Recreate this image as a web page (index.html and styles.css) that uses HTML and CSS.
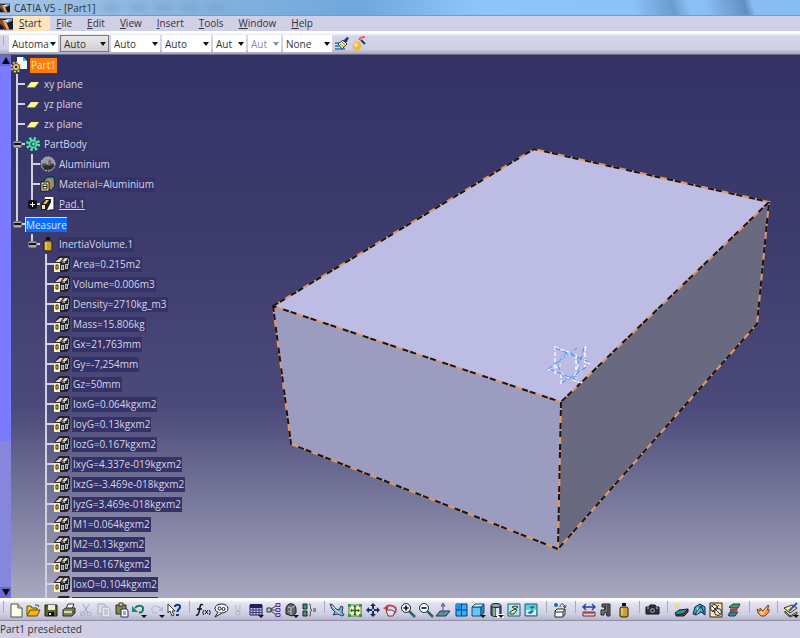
FILE: index.html
```html
<!DOCTYPE html>
<html lang="en">
<head>
<meta charset="utf-8">
<title>CATIA V5 - [Part1]</title>
<link rel="stylesheet" href="styles.css">
</head>
<body>
<svg class="sprite" aria-hidden="true">
  <symbol id="logo" viewBox="0 0 14 12"><rect width="14" height="12" fill="#131a2c"/><path d="M0 1 4 3 7 8 5 12 3 8 0 6Z" fill="#8a4a2c"/><path d="M2 1 7 4 10 12 7 12 5 7Z" fill="#ff9d4d"/><path d="M4 2 12 0 14 2 8 5Z" fill="#7fa4c8"/><path d="M4 2 10 1 8 4Z" fill="#e3f2ff"/></symbol>
  <symbol id="part" viewBox="0 0 16 16"><path d="M6 0h6l4 4v8H6z" fill="#f4fbff"/><path d="M12 0v4h4z" fill="#49b5c4"/><circle cx="5" cy="10" r="4.500" fill="none" stroke="#e9cf85" stroke-width="2" stroke-dasharray="2 1.500"/><circle cx="5" cy="10" r="3.500" fill="#f5dc8c" stroke="#5a4720"/><circle cx="5" cy="10" r="1.400" fill="#4a3210"/></symbol>
  <symbol id="plane" viewBox="0 0 16 16"><path d="M2 11 6 6h8l-4 5z" fill="#fff58f"/><path d="M2 11h8l4-5v1l-4 5H2z" fill="#96872c"/></symbol>
  <symbol id="body" viewBox="0 0 16 16"><circle cx="8" cy="8" r="6" fill="none" stroke="#0d4a50" stroke-width="4" stroke-dasharray="2.6 2.1"/><circle cx="8" cy="8" r="5.600" fill="none" stroke="#55e2b2" stroke-width="3" stroke-dasharray="2.3 2.1"/><circle cx="8" cy="8" r="4.400" fill="#4fdcae"/><circle cx="8" cy="8" r="2.600" fill="#1c6b62"/><circle cx="8.500" cy="8" r="1.200" fill="#8ff0cf"/></symbol>
  <symbol id="material" viewBox="0 0 16 16"><circle cx="8" cy="8" r="7" fill="#55555c"/><path d="M1 8a7 7 0 0 1 14 0l-4-1-3 2-3-2z" fill="#9a9aa4"/><path d="M3 10 7 9l3 1 4-2-1 4-5 2-4-1z" fill="#332b2b"/><path d="M9 3l3 3-4 2z" fill="#6f5f62"/><circle cx="8" cy="8" r="7" fill="none" stroke="#c9c9d2" stroke-dasharray="2 1"/></symbol>
  <symbol id="param" viewBox="0 0 16 16"><path d="M3 6 7 1h7l1 9-4 5z" fill="#4f9a84" stroke="#1c1c24"/><path d="M8 3h4l1 6-3 4z" fill="#c57a64"/><path d="M1 6h8v9H1z" fill="#fff3a8" stroke="#1a1a1a"/><path d="M3 8h4v5H3zM3 10.500h4" fill="none" stroke="#1a1a1a"/></symbol>
  <symbol id="pad" viewBox="0 0 16 16"><path d="M5 1h9v13H4l-1-1z" fill="#fff"/><path d="M1 8 5 3h6v3L7 14H1z" fill="#1a1a1a"/><path d="M2 9h3v4H2z" fill="#f6e88c"/><path d="M3 8 6 4h3L6 8z" fill="#d9c35a"/><path d="M14 1v13H9" fill="none" stroke="#111"/></symbol>
  <symbol id="inertia" viewBox="0 0 16 16"><path d="M6 1h4v3H6z" fill="#111"/><path d="M5 5h6l1 1v8l-1 1H5l-1-1V6z" fill="#caa02e" stroke="#2b2108"/><path d="M6 6v7" stroke="#f2d26a" stroke-width="1.500"/></symbol>
  <symbol id="meas" viewBox="0 0 16 16"><path d="M0 6 5 0h10l1 2v11l-3 3H0z" fill="#26242a"/><path d="M1 6 6 2h3L6 6zM8 5l3-3h3l-2 3z" fill="#e9d3cf"/><path d="M0 7h6v9H0z" fill="#fff2a6"/><path d="M2 9h2v4H2z" fill="#fff2a6" stroke="#26242a"/><path d="M7 9h3v5H7zM11 8h3v5h-3zM7 6l4-1v2z" fill="#b9c3c2"/><path d="M8 10h1v3H8zM12 9h1v3h-1z" fill="#4b5a5a"/><path d="M14 3h1v6h-1z" fill="#8ba09c"/></symbol>

  <symbol id="i-new" viewBox="0 0 16 16"><path d="M3 2h7l4 4v9H3z" fill="#fffef0" stroke="#55553f"/><path d="M10 2v4h4" fill="#d9d9a0" stroke="#55553f"/></symbol>
  <symbol id="i-open" viewBox="0 0 16 16"><path d="M2 13V4h4l1 2h5v2" fill="#f6c92f" stroke="#5e4a08"/><path d="M2 14 5 8h10l-3 6z" fill="#f4b322" stroke="#5e4a08"/><path d="M10 3h3l1 2" fill="none" stroke="#444"/></symbol>
  <symbol id="i-save" viewBox="0 0 16 16"><path d="M2 3h12v11H2z" fill="#5c6620" stroke="#1d2208"/><path d="M5 3h7v5H5z" fill="#e9ead9"/><path d="M5 10h6v4H5z" fill="#111"/><path d="M6 11h2v2H6z" fill="#ddd"/></symbol>
  <symbol id="i-print" viewBox="0 0 16 16"><path d="M5 7 7 2h6l-2 5z" fill="#fff" stroke="#333"/><path d="M2 8l3-2h9v5l-3 3H2z" fill="#81845d" stroke="#26281a"/><path d="M3 9h8v2H3z" fill="#d7d9a8"/><path d="M12 8v4" stroke="#3a3c22"/></symbol>
  <symbol id="i-cut" viewBox="0 0 16 16"><path d="M5 2l5 9M11 2 6 11" stroke="#aaa9b9" fill="none"/><circle cx="4.500" cy="12" r="2" fill="none" stroke="#aaa9b9"/><circle cx="11" cy="12" r="2" fill="none" stroke="#aaa9b9"/></symbol>
  <symbol id="i-copy" viewBox="0 0 16 16"><path d="M2 2h6l2 2v8H2z" fill="#dddde9" stroke="#aaa9b9"/><path d="M6 5h6l2 2v8H6z" fill="#e5e5ef" stroke="#aaa9b9"/><path d="M8 8h4M8 10h4M8 12h4" stroke="#aaa9b9"/></symbol>
  <symbol id="i-paste" viewBox="0 0 16 16"><path d="M2 3h10v9H2z" fill="#8a8540" stroke="#302e10"/><path d="M5 1h4v3H5z" fill="#d9d9b2" stroke="#333"/><path d="M7 7h6l1 2v6H7z" fill="#f6f6ff" stroke="#22306f"/><path d="M9 10h3M9 12h3" stroke="#4a5bb5"/></symbol>
  <symbol id="i-undo" viewBox="0 0 16 16"><path d="M4 6c3-4 9-2 8 1 0 3-2 4-4 3" fill="none" stroke="#0f7b5f" stroke-width="2"/><path d="M1 4v6h6z" fill="#198a65"/><path class="drop" d="M10 13h6l-3 3z"/></symbol>
  <symbol id="i-redo" viewBox="0 0 16 16"><path d="M11 6c-4-4-9-1-8 2 0 3 3 3 5 3" fill="none" stroke="#b4b3c3" stroke-width="1.500" stroke-dasharray="2 1"/><path d="M14 4v5H9z" fill="#b9b8c7"/><path class="drop" d="M10 13h6l-3 3z"/></symbol>
  <symbol id="i-help" viewBox="0 0 16 16"><path d="M2 2v9l2-2 2 5 2-1-2-4h3z" fill="#fff" stroke="#333"/><path d="M9 5c0-3 5-3 5 0 0 2-2.500 2-2.500 5" fill="none" stroke="#123c86" stroke-width="2.200"/><path d="M10 12h3v2h-3z" fill="#123c86"/></symbol>
  <symbol id="i-fx" viewBox="0 0 16 16"><path d="M8 3C5 1 5 5 4.500 8S3 14 1 13M2 7h5" fill="none" stroke="#111" stroke-width="1.500"/><path d="M9 8c-1.500 1-1.500 4 0 5M10 8l3 4M13 8l-3 4M14 8c1.500 1 1.500 4 0 5" fill="none" stroke="#111"/></symbol>
  <symbol id="i-note" viewBox="0 0 16 16"><ellipse cx="8.500" cy="6.500" rx="6.500" ry="4.500" fill="#f4f4fa" stroke="#222"/><path d="M5 10 2 15l7-4" fill="#f4f4fa" stroke="#222"/><circle cx="6.500" cy="6.500" r="1.500" fill="none" stroke="#222"/><circle cx="10.500" cy="7" r="1.500" fill="none" stroke="#222"/></symbol>
  <symbol id="i-lock" viewBox="0 0 16 16"><path d="M6 3v4c0 2 4 2 4 0V3" fill="none" stroke="#b1b0c0"/><circle cx="8" cy="11" r="2" fill="none" stroke="#b1b0c0"/></symbol>
  <symbol id="i-table" viewBox="0 0 16 16"><path d="M2 3h12v10H2z" fill="#c9cce8" stroke="#1d1f4a"/><path d="M2 2h12v4H2z" fill="#20205c"/><path d="M2 8h12M2 10.500h12M5 6v7M8 6v7M11 6v7" stroke="#34397c"/><path class="drop" d="M10 13h6l-3 3z"/></symbol>
  <symbol id="i-graph" viewBox="0 0 16 16"><path d="M4 8 11 3M4 8h6M4 8l6 5" stroke="#333"/><path d="M1 6h4v4H1z" fill="#b9c6e0" stroke="#333"/><path d="M10 1.500h4v3h-4zM10 6.500h4v3h-4zM10 11.500h4v3h-4z" fill="#d9b8f1" stroke="#513a8e"/></symbol>
  <symbol id="i-know" viewBox="0 0 16 16"><path d="M3 7c0-7 10-7 10 0v4l-4 3-6-2z" fill="#66676d" stroke="#1b1b1f"/><path d="M5 5l3 1v7M8 6l4-2M5 9l3 1" fill="none" stroke="#c1c1c9"/><path class="drop" d="M10 13h6l-3 3z"/></symbol>
  <symbol id="i-rule" viewBox="0 0 16 16"><path d="M2 2h4v5H2zM2 9h4v5H2z" fill="#4b8f72" stroke="#1f2b28"/><path d="M8 2c3 0 0 5 3 6-3 1 0 6-3 6M12 7h3M12 9h3" fill="none" stroke="#3c3d48"/></symbol>
  <symbol id="i-fly" viewBox="0 0 16 16"><path d="M1 2c3 0 4 3 6 5l3 1 2-4 2 1-1 5 2 3-2 1-4-2-5 1 2-3-3-3z" fill="#7fb4d6" stroke="#213b60"/><path d="M3 4l4 4 4 4" stroke="#e8f4ff" fill="none"/></symbol>
  <symbol id="i-fit" viewBox="0 0 16 16"><path d="M2 3h12v11H2z" fill="#ffffb4" stroke="#4d7d3d"/><path d="M8 4v9M4 8.500h8" stroke="#1c5c34" stroke-width="1.500"/><path d="M6 5h4L8 3zM6 12h4l-2 2zM5 6.500v4l-2-2zM11 6.500v4l2-2z" fill="#176f3c"/><path d="M1 2h3v3H1zM12 2h3v3h-3zM1 12h3v3H1zM12 12h3v3h-3z" fill="#3f8f4a"/></symbol>
  <symbol id="i-pan" viewBox="0 0 16 16"><path d="M8 1l3 3H5zM8 15l3-3H5zM1 8l3-3v6zM15 8l-3-3v6z" fill="#14305e"/><path d="M8 3v10M3 8h10" stroke="#14305e" stroke-width="2"/><path d="M7 7h2v2H7z" fill="#b7c7e8"/></symbol>
  <symbol id="i-rotate" viewBox="0 0 16 16"><path d="M4 6c1-4 10-3 10 2 0 3-3 5-6 4" fill="none" stroke="#b24a4c" stroke-width="1.800"/><path d="M1 6l5-2v5z" fill="#d33539"/><path d="M4 8h6l3 2-2 4H6z" fill="#e8e0e4" stroke="#69413d"/></symbol>
  <symbol id="i-zin" viewBox="0 0 16 16"><path d="M9 9l6 6" stroke="#335f70" stroke-width="2.500"/><circle cx="6" cy="6" r="4.500" fill="#f4f8ff" stroke="#1d2b3c"/><path d="M6 3.500v5M3.500 6h5" stroke="#111" stroke-width="1.600"/></symbol>
  <symbol id="i-zout" viewBox="0 0 16 16"><path d="M9 9l6 6" stroke="#335f70" stroke-width="2.500"/><circle cx="6" cy="6" r="4.500" fill="#f4f8ff" stroke="#1d2b3c"/><path d="M3.500 6h5" stroke="#111" stroke-width="1.600"/></symbol>
  <symbol id="i-normal" viewBox="0 0 16 16"><path d="M1 14 5 9h10l-4 5z" fill="#4f95a5" stroke="#1e3c47"/><path d="M8 11V4" stroke="#7a3f8e"/><path d="M8 1l2 3H6z" fill="#a7a2ce" stroke="#6b4b93"/></symbol>
  <symbol id="i-multi" viewBox="0 0 16 16"><path d="M3 2h11v12H3z" fill="#31b5f2" stroke="#122d8e"/><path d="M3 2h6v6H3z" fill="#1c8fe8"/><path d="M8.500 2v12M3 8h11" stroke="#122d8e"/></symbol>
  <symbol id="i-iso" viewBox="0 0 16 16"><path d="M2 5h9v9H2z" fill="#67c7f6" stroke="#174e77"/><path d="M2 5l3-3h9l-3 3z" fill="#bdecff" stroke="#174e77"/><path d="M11 5l3-3v9l-3 3z" fill="#3186c4" stroke="#174e77"/><path class="drop" d="M10 13h6l-3 3z"/></symbol>
  <symbol id="i-shade" viewBox="0 0 16 16"><path d="M3 4v9c2 2 8 2 10 0V4z" fill="#456a9b" stroke="#15151a"/><path d="M5 5h2v9H5z" fill="#91b36f"/><path d="M8 5h3v9H8z" fill="#dbe2ff"/><ellipse cx="8" cy="3.500" rx="5" ry="2" fill="#9ca5bd" stroke="#15151a"/><path d="M9 12h7v4H9z" fill="#fff"/><path class="drop" d="M10 13h6l-3 3z"/></symbol>
  <symbol id="i-hide" viewBox="0 0 16 16"><path d="M2 2h12v12H2z" fill="#a5eff6" stroke="#285a6a"/><path d="M6 5l4-1 2 1-3 2zM4 10l5-3 2 1-3 4H4z" fill="#f0e58c" stroke="#2d3b39"/></symbol>
  <symbol id="i-swap" viewBox="0 0 16 16"><path d="M2 2h12v12H2z" fill="#48d9e8" stroke="#285a6a"/><path d="M3 8h10v5H3z" fill="#c9f4f8"/><path d="M6 5l4-1 2 1-3 2zM4 11l5-3 2 1-3 3z" fill="#366c74"/></symbol>
  <symbol id="i-catalog" viewBox="0 0 16 16"><path d="M3 9l2-2h8v5l-2 3H3z" fill="#fff" stroke="#222"/><path d="M3 10h8v4M11 10l2-3" fill="none" stroke="#222"/><circle cx="4" cy="3" r="2" fill="#1b6ca5"/><path d="M8 5c0-4 4-4 5 0M11 4l2 2 1-3" fill="none" stroke="#334d73"/></symbol>
  <symbol id="i-dist" viewBox="0 0 16 16"><path d="M3 5h10M5 2 2 5l3 3M11 2l3 3-3 3" fill="none" stroke="#203ea1" stroke-width="1.400"/><path d="M2 10h12v4H2z" fill="#f5cac6" stroke="#6b2930"/><path d="M4 10v2M6 10v2M8 10v2M10 10v2M12 10v2" stroke="#6b2930"/></symbol>
  <symbol id="i-item" viewBox="0 0 16 16"><path d="M4 2h8v12h-3l-1-4-2 1v2H3V8h4V5H4z" fill="#777780" stroke="#202028"/><path d="M7 3v5M10 3v10" stroke="#202028"/></symbol>
  <symbol id="i-camera" viewBox="0 0 16 16"><path d="M2 5h3l1-2h5l1 2h3v7H2z" fill="#35363c" stroke="#111"/><circle cx="8.500" cy="8.500" r="3" fill="#9c9fae" stroke="#111"/><circle cx="8.500" cy="8.500" r="1.300" fill="#25262b"/><path d="M3 6h2M12 6h2" stroke="#d5d5dd"/></symbol>
  <symbol id="i-render" viewBox="0 0 16 16"><path d="M2 11 6 8l9-1-4 5-8 1z" fill="#268e9a" stroke="#161d29"/><path d="M3 13l8-1 4-5v3l-4 4H3z" fill="#9c2f3d" stroke="#161d29"/><path d="M4 1v7M1 4h6M2 2l4 4M6 2 2 6" stroke="#efdb72"/></symbol>
  <symbol id="i-draft" viewBox="0 0 16 16"><path d="M2 12 4 5l5-3 5 3v8l-4-3-5 3z" fill="#37a7cb" stroke="#16233d"/><path d="M6 5l3 2-3 5z" fill="#dfef8a"/><path d="M10 4l3 7M4 12l6-8" stroke="#16233d"/></symbol>
  <symbol id="i-curv" viewBox="0 0 16 16"><path d="M2 1h12v14H2z" fill="#ffe996" stroke="#222"/><circle cx="6" cy="6" r="3.500" fill="#f5f5f5" stroke="#222"/><circle cx="10" cy="10" r="3.500" fill="#e2e3e8" stroke="#222"/><path d="M4 4l8 8M4 10l7-7" stroke="#333"/></symbol>
  <symbol id="i-layer" viewBox="0 0 16 16"><path d="M3 5l4-3h7l-2 4H4z" fill="#3e9a65" stroke="#26413b"/><path d="M4 7h8l-1 3H3z" fill="#e6ce67"/><path d="M4 7l8-1-1 3-7 1z" fill="#a3413b"/><path d="M2 13l2-3h8l-3 4H3z" fill="#2f8296" stroke="#26413b"/></symbol>
  <symbol id="i-hand" viewBox="0 0 16 16"><path d="M2 7l3 2V6l3 3 5-6 1 1-2 4 2-1v3l-4 4H6l-3-3z" fill="#eb9950" stroke="#844419"/><path d="M5 10l3 1 4-5M5 12l4 0" fill="none" stroke="#ffe0a0"/></symbol>
  <symbol id="i-sketch" viewBox="0 0 16 16"><path d="M1 6l8-3 5 3-7 5z" fill="#f7ec88" stroke="#343523"/><path d="M2 9l5 5 7-4v2l-7 3-5-4z" fill="#fff4a0" stroke="#343523"/><path d="M14 1 8 7l-2 2" stroke="#304caa" stroke-width="1.800"/><path class="drop" d="M10 13h6l-3 3z"/></symbol>
  <symbol id="i-brush" viewBox="0 0 16 16"><path d="M1 7h8M1 10h9M1 13h10" stroke="#287bb8" stroke-width="1.600"/><path d="M4 8l5-4 4 4-5 5z" fill="#f1eca4" stroke="#4b4b31"/><path d="M6 8l4 3M8 6l3 3" stroke="#8d8950"/><path d="M9 5l4-4 2 1-3 5z" fill="#263777"/></symbol>
  <symbol id="i-wizard" viewBox="0 0 16 16"><circle cx="5" cy="10" r="4.500" fill="#f6b938"/><circle cx="4" cy="9" r="2" fill="#ffe28a"/><path d="M9 4 13 8" stroke="#28346d" stroke-width="2"/><path d="M7 4c1-3 4-3 6-3" fill="none" stroke="#e9644c" stroke-width="2"/></symbol>
</svg>

<header class="titlebar">
  <svg class="title-icon"><use href="#logo"/></svg>
  <h1>CATIA V5 - [Part1]</h1>
  <span class="glass"></span>
</header>

<nav class="menubar" aria-label="Main menu">
  <svg class="menu-icon"><use href="#logo"/></svg>
  <button class="menu active"><u>S</u>tart</button>
  <button class="menu"><u>F</u>ile</button>
  <button class="menu"><u>E</u>dit</button>
  <button class="menu"><u>V</u>iew</button>
  <button class="menu"><u>I</u>nsert</button>
  <button class="menu"><u>T</u>ools</button>
  <button class="menu"><u>W</u>indow</button>
  <button class="menu"><u>H</u>elp</button>
</nav>

<div class="properties" role="toolbar" aria-label="Graphic properties">
  <label class="combo"><select aria-label="Fill color"><option>Automa</option></select></label>
  <label class="combo pressed"><select aria-label="Transparency"><option>Auto</option></select></label>
  <label class="combo"><select aria-label="Line weight"><option>Auto</option></select></label>
  <label class="combo"><select aria-label="Line type"><option>Auto</option></select></label>
  <label class="combo narrow"><select aria-label="Point symbol"><option>Aut</option></select></label>
  <label class="combo narrow"><select aria-label="Rendering style" disabled><option>Aut</option></select></label>
  <label class="combo"><select aria-label="Layer"><option>None</option></select></label>
  <button class="tool" aria-label="Painter"><svg><use href="#i-brush"/></svg></button>
  <button class="tool" aria-label="Properties wizard"><svg><use href="#i-wizard"/></svg></button>
</div>

<main class="workspace">
  <div class="scroll">
    <button class="arrow up" aria-label="Scroll up"></button>
    <span class="thumb"></span>
    <button class="arrow down" aria-label="Scroll down"></button>
  </div>

  <div class="tree">
    <div class="row root"><svg class="icon"><use href="#part"/></svg><span class="label hot">Part1</span></div>
    <ul>
      <li><div class="row"><i class="tick"></i><svg class="icon"><use href="#plane"/></svg><span class="label">xy plane</span></div></li>
      <li><div class="row"><i class="tick"></i><svg class="icon"><use href="#plane"/></svg><span class="label">yz plane</span></div></li>
      <li><div class="row"><i class="tick"></i><svg class="icon"><use href="#plane"/></svg><span class="label">zx plane</span></div></li>
      <li>
        <div class="row"><button class="fold" aria-label="Collapse PartBody"></button><i class="stub"></i><svg class="icon"><use href="#body"/></svg><span class="label">PartBody</span></div>
        <ul>
          <li><div class="row"><i class="tick"></i><svg class="icon"><use href="#material"/></svg><span class="label">Aluminium</span></div></li>
          <li><div class="row"><i class="tick"></i><svg class="icon"><use href="#param"/></svg><span class="label">Material=Aluminium</span></div></li>
          <li><div class="row"><button class="fold plus" aria-label="Expand Pad.1"></button><i class="stub"></i><svg class="icon"><use href="#pad"/></svg><span class="label"><u>Pad.1</u></span></div></li>
        </ul>
      </li>
      <li>
        <div class="row"><button class="fold" aria-label="Collapse Measure"></button><i class="stub"></i><span class="label selected">Measure</span></div>
        <ul>
          <li>
            <div class="row"><button class="fold" aria-label="Collapse InertiaVolume.1"></button><i class="stub"></i><svg class="icon"><use href="#inertia"/></svg><span class="label">InertiaVolume.1</span></div>
            <ul class="values">
              <li><div class="row"><i class="tick"></i><svg class="icon"><use href="#meas"/></svg><span class="label">Area=0.215m2</span></div></li>
              <li><div class="row"><i class="tick"></i><svg class="icon"><use href="#meas"/></svg><span class="label">Volume=0.006m3</span></div></li>
              <li><div class="row"><i class="tick"></i><svg class="icon"><use href="#meas"/></svg><span class="label">Density=2710kg_m3</span></div></li>
              <li><div class="row"><i class="tick"></i><svg class="icon"><use href="#meas"/></svg><span class="label">Mass=15.806kg</span></div></li>
              <li><div class="row"><i class="tick"></i><svg class="icon"><use href="#meas"/></svg><span class="label">Gx=21,763mm</span></div></li>
              <li><div class="row"><i class="tick"></i><svg class="icon"><use href="#meas"/></svg><span class="label">Gy=-7,254mm</span></div></li>
              <li><div class="row"><i class="tick"></i><svg class="icon"><use href="#meas"/></svg><span class="label">Gz=50mm</span></div></li>
              <li><div class="row"><i class="tick"></i><svg class="icon"><use href="#meas"/></svg><span class="label">IoxG=0.064kgxm2</span></div></li>
              <li><div class="row"><i class="tick"></i><svg class="icon"><use href="#meas"/></svg><span class="label">IoyG=0.13kgxm2</span></div></li>
              <li><div class="row"><i class="tick"></i><svg class="icon"><use href="#meas"/></svg><span class="label">IozG=0.167kgxm2</span></div></li>
              <li><div class="row"><i class="tick"></i><svg class="icon"><use href="#meas"/></svg><span class="label">IxyG=4.337e-019kgxm2</span></div></li>
              <li><div class="row"><i class="tick"></i><svg class="icon"><use href="#meas"/></svg><span class="label">IxzG=-3.469e-018kgxm2</span></div></li>
              <li><div class="row"><i class="tick"></i><svg class="icon"><use href="#meas"/></svg><span class="label">IyzG=3.469e-018kgxm2</span></div></li>
              <li><div class="row"><i class="tick"></i><svg class="icon"><use href="#meas"/></svg><span class="label">M1=0.064kgxm2</span></div></li>
              <li><div class="row"><i class="tick"></i><svg class="icon"><use href="#meas"/></svg><span class="label">M2=0.13kgxm2</span></div></li>
              <li><div class="row"><i class="tick"></i><svg class="icon"><use href="#meas"/></svg><span class="label">M3=0.167kgxm2</span></div></li>
              <li><div class="row"><i class="tick"></i><svg class="icon"><use href="#meas"/></svg><span class="label">IoxO=0.104kgxm2</span></div></li>
              <li><div class="row"><i class="tick"></i><svg class="icon"><use href="#meas"/></svg><span class="label blank"></span></div></li>
            </ul>
          </li>
        </ul>
      </li>
    </ul>
  </div>

  <svg class="scene" viewBox="251 55 549 543" preserveAspectRatio="xMidYMid meet" role="img" aria-label="Pad solid">
    <defs>
      <path id="edges" d="M273 306 534 149 769 202 561 402ZM273 306 291 444 558 549 757 324 769 202M561 402 558 549"/>
    </defs>
    <path d="M273 306 534 149 769 202 561 402Z" fill="#bcbce4"/>
    <path d="M273 306 561 402 558 549 291 444Z" fill="#9c9cc0"/>
    <path d="M561 402 769 202 757 324 558 549Z" fill="#696980"/>
    <use href="#edges" class="edge"/>
    <use href="#edges" class="edge dash"/>
    <g class="compass">
      <path d="M555 346V374M555 347 571 353M576 354V382M582 383 565 377M586 346 584 353M585 347V367M548 370 560 366M561 384V374M590 364 584 360" stroke="#f4f8ff" stroke-width="1.500" stroke-dasharray="4 2"/>
      <path d="M555 348 589 362M548 369 577 348M562 383 588 366M550 369 581 382M584 348 580 362" stroke="#4a8fe0" stroke-dasharray="5 3"/>
      <ellipse cx="569" cy="366" rx="10" ry="13" stroke="#5b9ce6" stroke-dasharray="6 2"/>
      <ellipse cx="569" cy="366" rx="9" ry="12" stroke="#fff" stroke-dasharray="3 5"/>
    </g>
  </svg>
</main>

<footer>
  <div class="toolbar" role="toolbar" aria-label="Standard tools">
    <div class="group g10">
      <button class="tool" aria-label="New"><svg><use href="#i-new"/></svg></button>
      <button class="tool" aria-label="Open"><svg><use href="#i-open"/></svg></button>
      <button class="tool" aria-label="Save"><svg><use href="#i-save"/></svg></button>
      <button class="tool" aria-label="Print"><svg><use href="#i-print"/></svg></button>
      <button class="tool" aria-label="Cut"><svg><use href="#i-cut"/></svg></button>
      <button class="tool" aria-label="Copy"><svg><use href="#i-copy"/></svg></button>
      <button class="tool" aria-label="Paste"><svg><use href="#i-paste"/></svg></button>
      <button class="tool" aria-label="Undo"><svg><use href="#i-undo"/></svg></button>
      <button class="tool" aria-label="Redo"><svg><use href="#i-redo"/></svg></button>
      <button class="tool" aria-label="What's this"><svg><use href="#i-help"/></svg></button>
    </div>
    <div class="group g7">
      <button class="tool" aria-label="Formula"><svg><use href="#i-fx"/></svg></button>
      <button class="tool" aria-label="Comment"><svg><use href="#i-note"/></svg></button>
      <button class="tool" aria-label="Lock parameters"><svg><use href="#i-lock"/></svg></button>
      <button class="tool" aria-label="Design table"><svg><use href="#i-table"/></svg></button>
      <button class="tool" aria-label="Relations"><svg><use href="#i-graph"/></svg></button>
      <button class="tool" aria-label="Knowledge inspector"><svg><use href="#i-know"/></svg></button>
      <button class="tool" aria-label="Equivalent dimensions"><svg><use href="#i-rule"/></svg></button>
    </div>
    <div class="group g12">
      <button class="tool" aria-label="Fly mode"><svg><use href="#i-fly"/></svg></button>
      <button class="tool" aria-label="Fit all in"><svg><use href="#i-fit"/></svg></button>
      <button class="tool" aria-label="Pan"><svg><use href="#i-pan"/></svg></button>
      <button class="tool" aria-label="Rotate"><svg><use href="#i-rotate"/></svg></button>
      <button class="tool" aria-label="Zoom in"><svg><use href="#i-zin"/></svg></button>
      <button class="tool" aria-label="Zoom out"><svg><use href="#i-zout"/></svg></button>
      <button class="tool" aria-label="Normal view"><svg><use href="#i-normal"/></svg></button>
      <button class="tool" aria-label="Multi-view"><svg><use href="#i-multi"/></svg></button>
      <button class="tool" aria-label="Isometric view"><svg><use href="#i-iso"/></svg></button>
      <button class="tool" aria-label="Shading"><svg><use href="#i-shade"/></svg></button>
      <button class="tool" aria-label="Hide or show"><svg><use href="#i-hide"/></svg></button>
      <button class="tool" aria-label="Swap visible space"><svg><use href="#i-swap"/></svg></button>
    </div>
    <div class="group g1"><button class="tool" aria-label="Catalog browser"><svg><use href="#i-catalog"/></svg></button></div>
    <div class="group g3">
      <button class="tool" aria-label="Measure between"><svg><use href="#i-dist"/></svg></button>
      <button class="tool" aria-label="Measure item"><svg><use href="#i-item"/></svg></button>
      <button class="tool" aria-label="Measure inertia"><svg><use href="#inertia"/></svg></button>
    </div>
    <div class="group g1"><button class="tool" aria-label="Capture"><svg><use href="#i-camera"/></svg></button></div>
    <div class="group g4">
      <button class="tool" aria-label="Apply material"><svg><use href="#i-render"/></svg></button>
      <button class="tool" aria-label="Draft analysis"><svg><use href="#i-draft"/></svg></button>
      <button class="tool" aria-label="Curvature analysis"><svg><use href="#i-curv"/></svg></button>
      <button class="tool" aria-label="Thickness analysis"><svg><use href="#i-layer"/></svg></button>
    </div>
    <div class="group g1"><button class="tool" aria-label="Manipulate"><svg><use href="#i-hand"/></svg></button></div>
    <div class="group g1"><button class="tool" aria-label="Sketcher"><svg><use href="#i-sketch"/></svg></button></div>
  </div>
  <p class="status">Part1 preselected</p>
</footer>
</body>
</html>
```
FILE: styles.css
```css
*, ::before, ::after { box-sizing: border-box; }

body {
  margin: 0;
  height: 100vh;
  display: flex;
  flex-direction: column;
  overflow: hidden;
  background: #cfcee4;
  color: #33333c;
  font: 10px/16px "Open Sans", "Noto Sans", sans-serif;
}

button {
  margin: 0;
  padding: 0;
  border: 0;
  background: none;
  color: inherit;
  font: inherit;
}

svg { display: block; }
.sprite { display: none; }
.drop { fill: #111; }

/* Title bar */
.titlebar {
  display: flex;
  align-items: center;
  flex: none;
  height: 16px;
  border-bottom: 1px solid #6f9cc8;
  background:
    linear-gradient(75deg, transparent 79%, #6c9ccf 84%, transparent 86%, transparent 88%, #628fc2 93%, transparent 94%),
    linear-gradient(90deg, #a4c4e6, #86b2de 25%, #6fa8dc 45%, #8fc5fb 60%, #8cc2f8 80%, #86bcf2);
}
.title-icon { width: 10px; height: 10px; }
h1 { margin: 0 0 0 4px; font-size: 10px; font-weight: 400; }
.glass {
  flex: 0 1 130px;
  height: 5px;
  margin-left: 8px;
  background: repeating-linear-gradient(90deg, #6290bd 0 14px, transparent 20px 26px);
  filter: blur(3px);
  opacity: .5;
}

/* Menu bar */
.menubar { display: flex; align-items: stretch; flex: none; height: 15px; background: #cfcfe5; }
.menu-icon { width: 13px; height: 12px; margin-top: 2px; }
.menu { padding: 0 9px 0 6px; line-height: 15px; }
.menu.active { background: #fde4bd; }
u { text-underline-offset: 1px; }

/* Graphic properties */
.properties {
  display: flex;
  align-items: center;
  flex: none;
  gap: 2px;
  height: 24px;
  padding: 2px 0 0 9px;
  border-bottom: 1px solid #6a6a82;
  background:
    linear-gradient(#a9a9bc, #a9a9bc) 3px 5px / 1px 9px no-repeat,
    linear-gradient(#fff 0 2px, #d6d6ea 5px, #cfcfe6 18px, #a5a4bb 23px);
}
.combo { display: grid; align-items: center; width: 49px; height: 17px; background: #fff; }
.combo.narrow { width: 33px; }
.combo::after {
  content: "";
  grid-area: 1 / 1;
  justify-self: end;
  margin-right: 2px;
  border: 3px solid transparent;
  border-top: 4px solid #111;
  border-bottom: 0;
  pointer-events: none;
}
.combo:has(:disabled)::after { border-top-color: #8d8d93; }
.combo select {
  grid-area: 1 / 1;
  appearance: none;
  width: 100%;
  padding: 0 0 0 3px;
  border: 0;
  background: none;
  color: #33333c;
  font: inherit;
}
.combo select:disabled { color: #8d8d93; opacity: 1; }
.combo.pressed { border: 1px solid #77777f; background: linear-gradient(#e9e9ec, #cfcfd3); }
.tool { display: grid; place-items: center; min-width: 0; }
.tool svg { width: 16px; height: 16px; }

/* Workspace */
.workspace {
  display: grid;
  grid-template-columns: 11px 240px minmax(0, 1fr);
  grid-template-rows: minmax(0, 1fr);
  flex: 1;
  min-height: 0;
  background: linear-gradient(#333265, #3d3c6d 35%, #4b4a79 65%, #76769a 81%, #9594b0 93%, #a9a9c1);
}
.scroll { display: flex; flex-direction: column; background: #8786dc; }
.thumb { flex: 0 0 69%; background: #7b7bff; }
.arrow { display: grid; place-items: center; flex: none; height: 11px; background: #6a6ad2; }
.arrow::before { content: ""; border: 4px solid transparent; }
.arrow.up::before { border-top: 0; border-bottom: 7px solid #0b0b18; }
.arrow.down { margin-top: auto; }
.arrow.down::before { border-bottom: 0; border-top: 7px solid #0b0b18; }

/* Specification tree */
.tree { overflow: hidden; color: #d6d6e4; }
.tree ul { margin: 0; padding: 0 0 0 5px; list-style: none; }
.tree > ul { margin-top: -1px; }
.tree ul ul { padding-left: 15px; }
.tree ul .values { padding-left: 14px; }
.tree li { background: linear-gradient(#d0d0df, #d0d0df) 0 0 / 2px 100% no-repeat; }
.tree li:last-child { background-size: 2px 10px; }
.row { display: flex; align-items: center; height: 20px; white-space: nowrap; }
.tick { flex: none; width: 9px; height: 2px; background: #d0d0df; }
.stub { flex: none; width: 3px; height: 2px; background: #d0d0df; }
.fold {
  flex: none;
  width: 9px;
  height: 7px;
  margin-left: -3px;
  border: 1px solid #77777f;
  border-radius: 2px;
  background: linear-gradient(#111, #111) center / 7px 2px no-repeat #a9a9b2;
}
.fold.plus {
  height: 9px;
  border-color: #111;
  background:
    linear-gradient(#fff, #fff) center / 5px 1px no-repeat,
    linear-gradient(#fff, #fff) center / 1px 5px no-repeat #111;
}
.icon { flex: none; width: 16px; height: 16px; }
.label { margin-left: 2px; padding: 0 1px; line-height: 15px; background: #343266; }
.root .label { margin-left: 3px; }
.label.hot { background: #ff7d0a; color: #ffe3c2; }
.label.selected { margin-left: 0; border-top: 1px solid #d6e2ff; border-left: 1px solid #d6e2ff; padding: 0; line-height: 14px; background: #0a6cff; color: #d8e6ff; }
.label.blank { width: 86px; height: 15px; }

/* Solid */
.scene { width: 100%; height: 100%; }
.edge { fill: none; stroke: #dc9a6a; stroke-width: 2; }
.edge.dash { stroke: #15131c; stroke-dasharray: 6 2 6 7; }
.compass { fill: none; }

/* Tools and status */
footer { flex: none; }
.toolbar {
  display: flex;
  height: 23px;
  padding: 2px 0 0 7px;
  border-bottom: 1px solid #8f8fa6;
  background:
    linear-gradient(#a9a9bc, #a9a9bc) 3px 3px / 1px 12px no-repeat,
    linear-gradient(#fff 0 2px, #e2e2f0 5px, #cfcfe5 16px, #b5b4ca);
}
.group { display: grid; grid-auto-flow: column; grid-auto-columns: minmax(0, 1fr); }
.group + .group {
  padding-left: 11px;
  background: linear-gradient(#a9a9bc, #a9a9bc) 6px 1px / 1px 12px no-repeat;
}
.g1 { flex: 1 1 0; }
.g3 { flex: 3 1 0; }
.g4 { flex: 4 1 0; }
.g7 { flex: 7 1 0; }
.g10 { flex: 10 1 0; }
.g12 { flex: 12 1 0; }
.status { margin: 0; line-height: 17px; }
```
